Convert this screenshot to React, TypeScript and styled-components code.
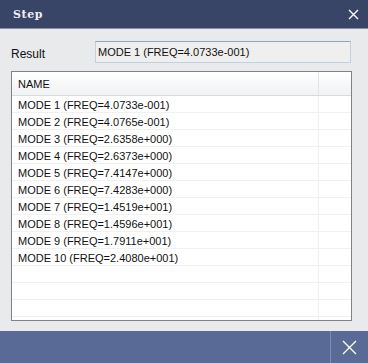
import React from "react";
import styled, { createGlobalStyle } from "styled-components";

const Global = createGlobalStyle`
  html, body { margin: 0; padding: 0; }
  body { width: 368px; height: 363px; overflow: hidden; background: #e9eaec; }
  #root { width: 368px; height: 363px; }
`;

const Window = styled.div`
  width: 368px;
  height: 363px;
  display: flex;
  flex-direction: column;
  background: #e9eaec;
  font-family: "Liberation Sans", Arial, sans-serif;
  font-size: 11px;
  color: #111;
`;

const TitleBar = styled.div`
  height: 28px;
  flex: 0 0 28px;
  background: #394566;
  border-bottom: 1px solid #8b909c;
  display: flex;
  align-items: center;
  justify-content: space-between;
  padding: 0 9px 0 13px;
`;

const Title = styled.span`
  font-family: "DejaVu Serif", "Liberation Serif", serif;
  font-weight: bold;
  font-size: 11px;
  letter-spacing: 0.6px;
  color: #eef0f5;
  margin-top: 1px;
`;

const CloseIcon = styled.svg<{ $size: number }>`
  width: ${(p) => p.$size}px;
  height: ${(p) => p.$size}px;
  display: block;
`;

const Body = styled.div`
  flex: 1;
  display: flex;
  flex-direction: column;
  padding: 12px 16px 10px 11px;
  gap: 8px;
  min-height: 0;
`;

const ResultRow = styled.div`
  display: flex;
  align-items: center;
  height: 22px;
`;

const Label = styled.span`
  width: 84px;
  flex: 0 0 84px;
  font-size: 12px;
  padding-top: 3px;
`;

const Field = styled.div`
  flex: 1;
  height: 22px;
  box-sizing: border-box;
  background: #efefef;
  border: 1px solid #c4d0de;
  border-top-color: #8fa6c2;
  display: flex;
  align-items: center;
  padding: 0 2px 1px 2px;
  margin-right: 1px;
`;

const List = styled.div`
  flex: 1;
  border: 1px solid #7f8288;
  background: #fff;
  overflow: hidden;
  display: flex;
  flex-direction: column;
`;

const HeaderRow = styled.div`
  display: grid;
  grid-template-columns: 307px 1fr;
  height: 23px;
  flex: 0 0 23px;
  background: linear-gradient(#ffffff, #f1f2f4);
  border-bottom: 1px solid #d9dadc;
`;

const HeaderCell = styled.div<{ $last?: boolean }>`
  display: flex;
  align-items: center;
  padding-left: 6px;
  padding-top: 1px;
  border-right: ${(p) => (p.$last ? "none" : "1px solid #e3e4e6")};
`;

const Row = styled.div`
  display: grid;
  grid-template-columns: 307px 1fr;
  height: 17px;
  flex: 0 0 17px;
  box-sizing: border-box;
  border-bottom: 1px solid #f1f1f1;
`;

const Cell = styled.div<{ $last?: boolean }>`
  padding: 3px 0 0 6px;
  line-height: 13px;
  white-space: nowrap;
  border-right: ${(p) => (p.$last ? "none" : "1px solid #f0f0f0")};
`;

const Footer = styled.div`
  height: 32px;
  flex: 0 0 32px;
  background: #5a6a96;
  display: flex;
  justify-content: flex-end;
`;

const FooterButton = styled.div`
  width: 36px;
  border-left: 1px solid #7e8cb2;
  display: flex;
  align-items: center;
  justify-content: center;
  padding-right: 1px;
`;

const modes = [
  "MODE 1 (FREQ=4.0733e-001)",
  "MODE 2 (FREQ=4.0765e-001)",
  "MODE 3 (FREQ=2.6358e+000)",
  "MODE 4 (FREQ=2.6373e+000)",
  "MODE 5 (FREQ=7.4147e+000)",
  "MODE 6 (FREQ=7.4283e+000)",
  "MODE 7 (FREQ=1.4519e+001)",
  "MODE 8 (FREQ=1.4596e+001)",
  "MODE 9 (FREQ=1.7911e+001)",
  "MODE 10 (FREQ=2.4080e+001)",
  "",
  "",
  "",
  "",
];

const X = ({ size, stroke }: { size: number; stroke: number }) => (
  <CloseIcon $size={size} viewBox={`0 0 ${size} ${size}`}>
    <path
      d={`M1 1 L${size - 1} ${size - 1} M${size - 1} 1 L1 ${size - 1}`}
      stroke="#ffffff"
      strokeWidth={stroke}
      fill="none"
    />
  </CloseIcon>
);

export default function App() {
  return (
    <>
      <Global />
      <Window>
        <TitleBar>
          <Title>Step</Title>
          <X size={11} stroke={1.4} />
        </TitleBar>
        <Body>
          <ResultRow>
            <Label>Result</Label>
            <Field>MODE 1 (FREQ=4.0733e-001)</Field>
          </ResultRow>
          <List>
            <HeaderRow>
              <HeaderCell>NAME</HeaderCell>
              <HeaderCell $last />
            </HeaderRow>
            {modes.map((m, i) => (
              <Row key={i}>
                <Cell>{m}</Cell>
                <Cell $last />
              </Row>
            ))}
          </List>
        </Body>
        <Footer>
          <FooterButton>
            <X size={15} stroke={1.3} />
          </FooterButton>
        </Footer>
      </Window>
    </>
  );
}
